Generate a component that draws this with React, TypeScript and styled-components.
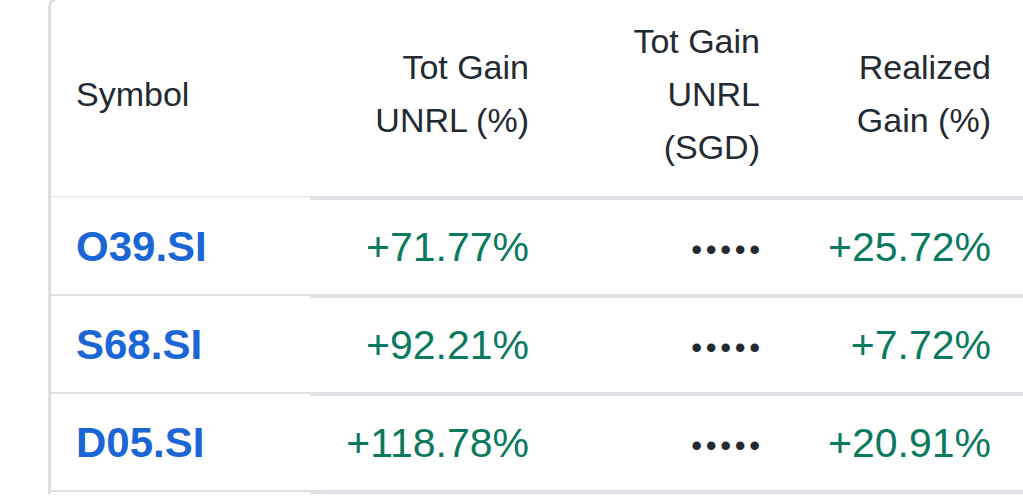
import React from "react";
import styled, { createGlobalStyle } from "styled-components";

const GlobalStyle = createGlobalStyle`
  html, body {
    margin: 0;
    padding: 0;
    background: #ffffff;
    overflow: hidden;
  }
  body {
    font-family: "Liberation Sans", Arial, sans-serif;
    color: #232a31;
  }
`;

const BORDER = "#dfe1e6";

const Page = styled.div`
  padding-left: 48px;
  height: 498px;
  overflow: hidden;
`;

const Card = styled.div`
  margin-top: -3px;
  width: 1060px;
  border-left: 3px solid #dcdfe4;
  border-top: 3px solid #dcdfe4;
  border-top-left-radius: 10px;
  background: #ffffff;
`;

const Row = styled.div`
  display: flex;
  align-items: flex-start;
`;

const Cell = styled.div<{ $width?: number; $height: number; $border: number; $gap?: number; $align?: "left" | "right" }>`
  box-sizing: content-box;
  flex: ${(p) => (p.$width ? `0 0 ${p.$width}px` : "1 1 auto")};
  height: ${(p) => p.$height}px;
  border-bottom: ${(p) => p.$border}px solid ${BORDER};
  margin-bottom: ${(p) => p.$gap || 0}px;
  display: flex;
  flex-direction: column;
  justify-content: center;
  align-items: ${(p) => (p.$align === "left" ? "flex-start" : "flex-end")};
  text-align: ${(p) => p.$align || "right"};
  padding: ${(p) => (p.$align === "left" ? "0 0 0 25px" : "0 24px 0 0")};
`;

const HeaderCell = styled(Cell)`
  padding-bottom: 8px;
  height: ${(p) => p.$height - 8}px;
`;

const HeadLine = styled.span`
  display: block;
  font-size: 34px;
  line-height: 53px;
  color: #232a31;
  white-space: nowrap;
`;

const SymbolLink = styled.a`
  font-size: 42px;
  font-weight: 700;
  color: #1a66d5;
  text-decoration: none;
  line-height: 50px;
`;

const Gain = styled.span`
  font-size: 41px;
  line-height: 50px;
  color: #0a7a5f;
  white-space: nowrap;
`;

const Masked = styled.span`
  font-size: 31px;
  line-height: 50px;
  padding-top: 6px;
  color: #232a31;
  letter-spacing: 3.6px;
  margin-right: -3.6px;
  white-space: nowrap;
`;

type Holding = {
  symbol: string;
  unrlPct: string;
  realizedPct: string;
};

const holdings: Holding[] = [
  { symbol: "O39.SI", unrlPct: "+71.77%", realizedPct: "+25.72%" },
  { symbol: "S68.SI", unrlPct: "+92.21%", realizedPct: "+7.72%" },
  { symbol: "D05.SI", unrlPct: "+118.78%", realizedPct: "+20.91%" },
];

const columns = [
  { width: 219, lines: ["Tot Gain", "UNRL (%)"] },
  { width: 207, lines: ["Tot Gain", "UNRL", "(SGD)"] },
  { width: 207, lines: ["Realized", "Gain (%)"] },
];

export default function App() {
  return (
    <>
      <GlobalStyle />
      <Page>
        <Card>
          <Row>
            <HeaderCell $width={234} $height={196} $border={1} $gap={3} $align="left">
              <HeadLine>Symbol</HeadLine>
            </HeaderCell>
            {columns.map((c) => (
              <HeaderCell key={c.lines.join(" ")} $width={c.width} $height={196} $border={4}>
                {c.lines.map((l) => (
                  <HeadLine key={l}>{l}</HeadLine>
                ))}
              </HeaderCell>
            ))}
            <HeaderCell $height={196} $border={4} />
          </Row>
          {holdings.map((h) => (
            <Row key={h.symbol}>
              <Cell $width={234} $height={94} $border={2} $gap={2} $align="left">
                <SymbolLink href="#">{h.symbol}</SymbolLink>
              </Cell>
              <Cell $width={219} $height={94} $border={4}>
                <Gain>{h.unrlPct}</Gain>
              </Cell>
              <Cell $width={207} $height={94} $border={4}>
                <Masked>•••••</Masked>
              </Cell>
              <Cell $width={207} $height={94} $border={4}>
                <Gain>{h.realizedPct}</Gain>
              </Cell>
              <Cell $height={94} $border={4} />
            </Row>
          ))}
        </Card>
      </Page>
    </>
  );
}
